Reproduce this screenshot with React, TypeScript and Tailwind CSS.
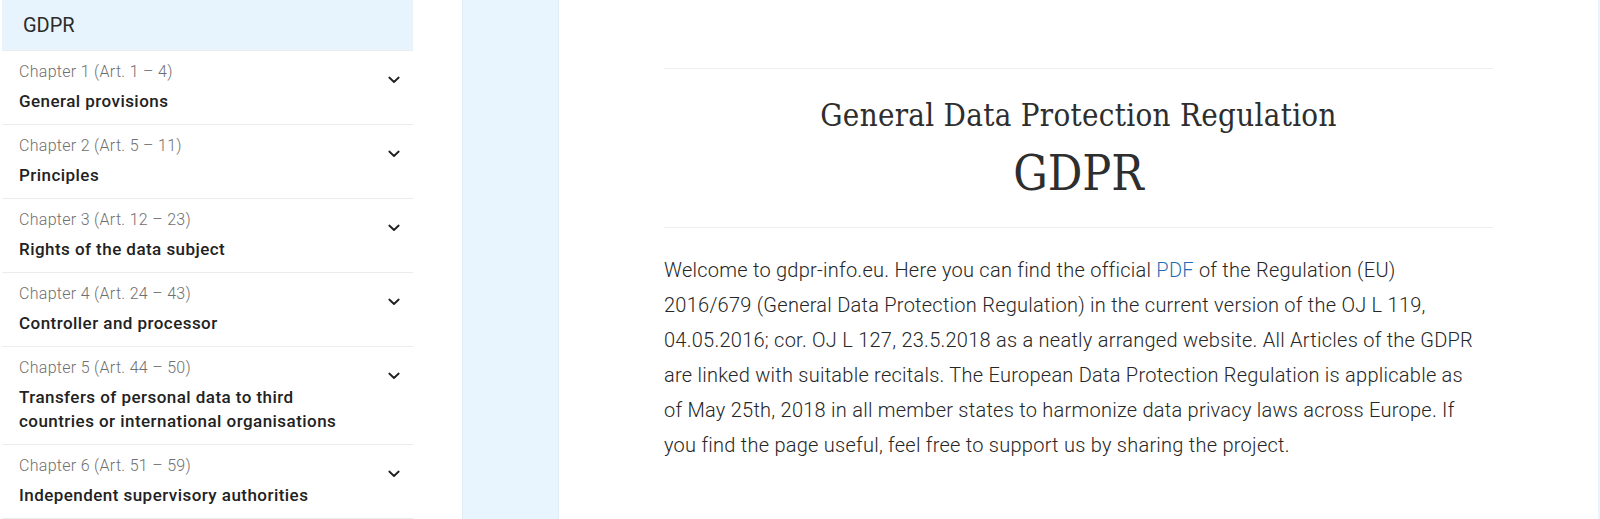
import React from "react";

const chapters = [
  { ch: "Chapter 1 (Art. 1 – 4)", title: ["General provisions"] },
  { ch: "Chapter 2 (Art. 5 – 11)", title: ["Principles"] },
  { ch: "Chapter 3 (Art. 12 – 23)", title: ["Rights of the data subject"] },
  { ch: "Chapter 4 (Art. 24 – 43)", title: ["Controller and processor"] },
  {
    ch: "Chapter 5 (Art. 44 – 50)",
    title: ["Transfers of personal data to third", "countries or international organisations"],
  },
  { ch: "Chapter 6 (Art. 51 – 59)", title: ["Independent supervisory authorities"] },
];

function Chevron() {
  return (
    <svg width="12" height="8" viewBox="0 0 12 8" fill="none">
      <path d="M1.3 1.5 L6 6 L10.7 1.5" stroke="#1f1f1f" strokeWidth="1.8" strokeLinecap="round" strokeLinejoin="round" />
    </svg>
  );
}

export default function App() {
  return (
    <div
      className="flex w-[1600px] h-[519px] overflow-hidden bg-white"
      style={{ fontFamily: "Roboto, 'Noto Sans', Arial, sans-serif" }}
    >
      <div className="w-[2px] shrink-0 bg-white" />
      {/* Sidebar */}
      <aside className="w-[411px] shrink-0 flex flex-col">
        <div className="h-[51px] shrink-0 bg-[#e8f4fd] border-b border-[#ececec] flex items-center pl-[21px] text-[20px] text-[#2b2b2b]">
          GDPR
        </div>
        {chapters.map((c) => (
          <div key={c.ch} className="shrink-0 flex border-b border-[#ececec] pl-[17px] pt-[9px] pb-[11px]">
            <div className="w-[345px] flex flex-col">
              <div className="text-[16px] leading-[24px] font-light tracking-[0.3px] text-[#6f6f6f] whitespace-nowrap">
                {c.ch}
              </div>
              <div className="mt-[5px] flex flex-col text-[17px] leading-[24px] font-medium tracking-[0.45px] text-[#222222]">
                {c.title.map((t) => (
                  <span key={t} className="whitespace-nowrap">
                    {t}
                  </span>
                ))}
              </div>
            </div>
            <div className="flex-1 flex justify-end pr-[13px] pt-[16px]">
              <Chevron />
            </div>
          </div>
        ))}
      </aside>
      <div className="w-[49px] shrink-0 bg-white" />
      {/* Blue column */}
      <div className="w-[97px] shrink-0 bg-[#e8f4fe] border-l border-r border-[#dfebf5]" />
      {/* Main */}
      <main className="flex-1 flex justify-center pt-[68px]">
        <div className="w-[829px] flex flex-col">
          <div className="border-t border-b border-[#efefef] flex flex-col items-center pt-[28px] pb-[26px]">
            <h1
              className="text-[31px] leading-[37px] font-normal tracking-[0.3px] text-[#2e2e2e] whitespace-nowrap"
              style={{ fontFamily: "'DejaVu Serif Condensed', 'DejaVu Serif', serif" }}
            >
              General Data Protection Regulation
            </h1>
            <div
              className="mt-[11px] text-[48px] leading-[56px] font-normal text-[#2e2e2e]"
              style={{ fontFamily: "'DejaVu Serif Condensed', 'DejaVu Serif', serif" }}
            >
              GDPR
            </div>
          </div>
          <p className="mt-[25px] text-[20px] leading-[35px] font-light tracking-[0.25px] text-[#262626]">
            <span className="whitespace-nowrap">
              Welcome to gdpr-info.eu. Here you can find the official <a className="text-[#1f6fb5]">PDF</a> of
              the Regulation (EU)
            </span>
            <br />
            <span className="whitespace-nowrap">
              2016/679 (General Data Protection Regulation) in the current version of the OJ L 119,
            </span>
            <br />
            <span className="whitespace-nowrap">
              04.05.2016; cor. OJ L 127, 23.5.2018 as a neatly arranged website. All Articles of the GDPR
            </span>
            <br />
            <span className="whitespace-nowrap">
              are linked with suitable recitals. The European Data Protection Regulation is applicable as
            </span>
            <br />
            <span className="whitespace-nowrap">
              of May 25th, 2018 in all member states to harmonize data privacy laws across Europe. If
            </span>
            <br />
            <span className="whitespace-nowrap">
              you find the page useful, feel free to support us by sharing the project.
            </span>
          </p>
        </div>
      </main>
      <div className="w-[2px] shrink-0 bg-[#e8f4fe]" />
    </div>
  );
}
